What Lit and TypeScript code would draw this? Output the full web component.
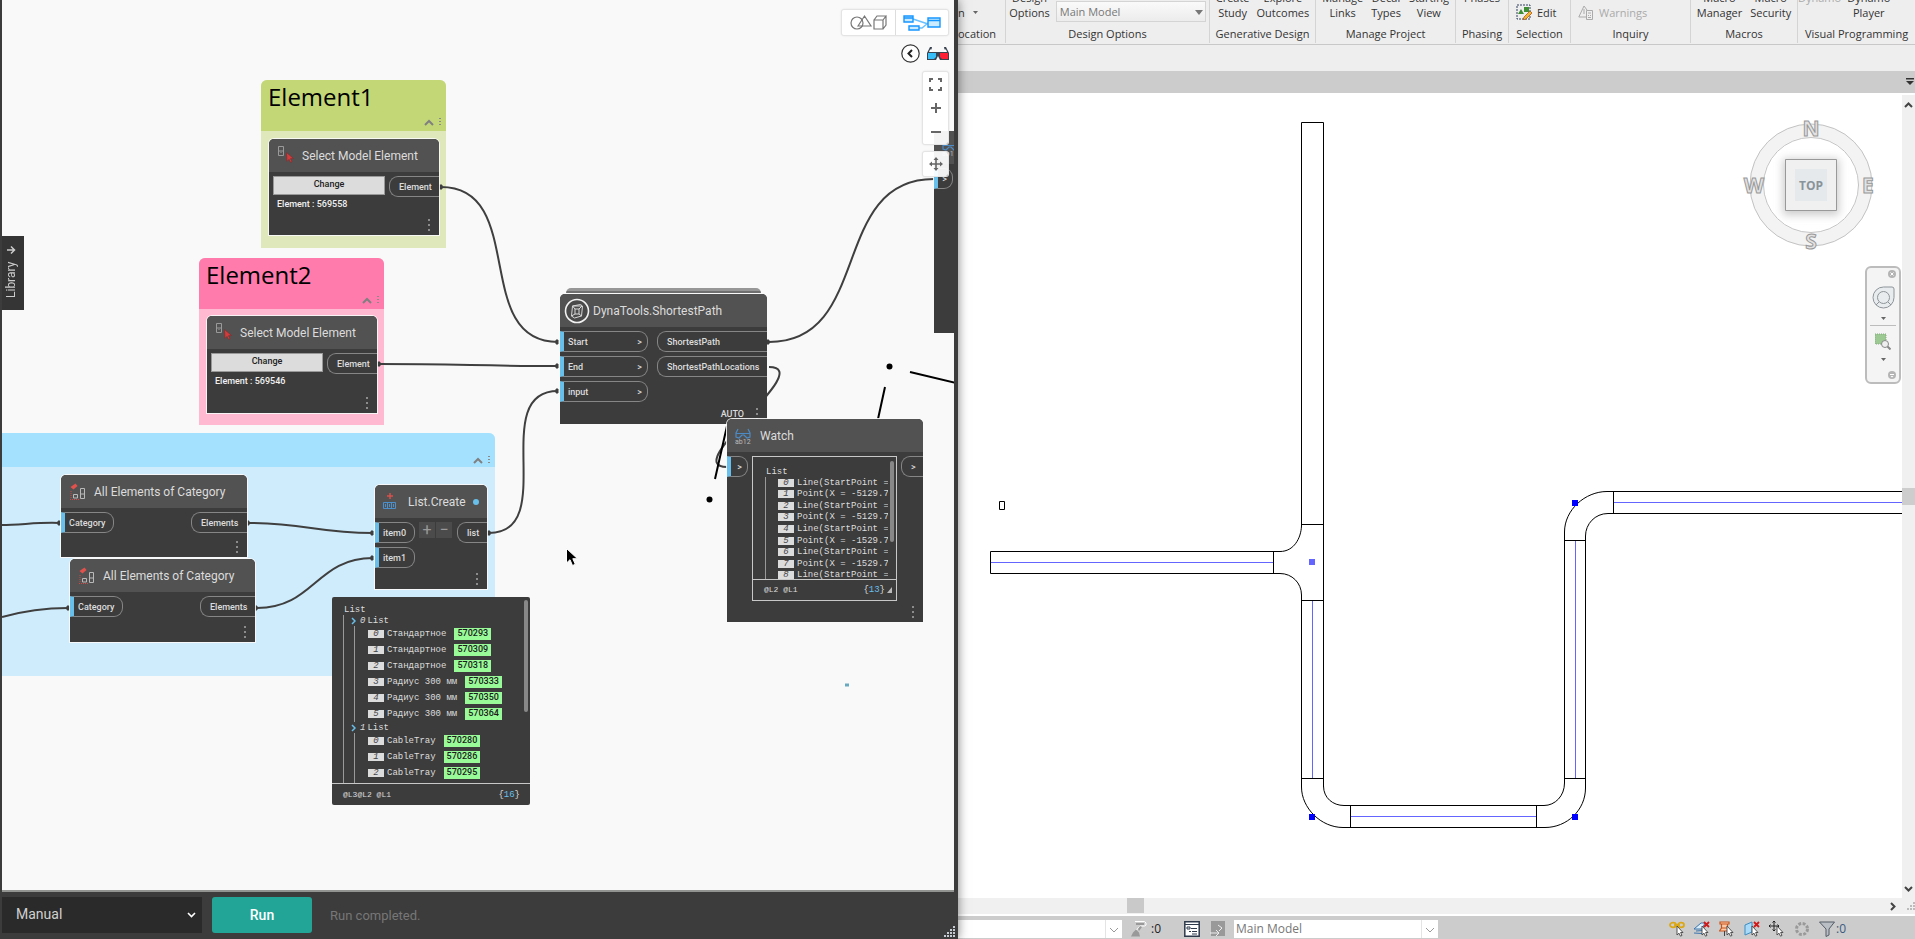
import { LitElement, html, svg, css, nothing } from "lit";
import { customElement } from "lit/decorators.js";

const kebab = svg`<svg width="3" height="12" viewBox="0 0 3 12" fill="#8c8c8c"><path d="M0 0h2v2H0zM0 5h2v2H0zM0 10h2v2H0z"/></svg>`;

const selectIcon = svg`<svg width="18" height="19" viewBox="0 0 18 19"><path d="M1.500 .5h5v9h-5zM1.500 5h5M3.500 6.500h1" fill="none" stroke="#9a9a9a"/><path d="M9.500 6.500l7 6-3 .2 1.500 3-1.500.7-1.500-3-2 2z" fill="#d23c3c" stroke="#7c2c2c" stroke-width=".6"/></svg>`;
const categoryIcon = svg`<svg width="18" height="18" viewBox="0 0 18 18"><path d="M1.500 4l5-3.500 2 2.500-4 3.500z" fill="#e2514c"/><path d="M2 8v8M1 16.500h9" stroke="#c94a46" stroke-dasharray="1 1"/><path d="M4.500 11.500h4v3.500h-4zM11.500 5.500h4v10h-4zM11.500 11h4" fill="none" stroke="#b9b9b9"/></svg>`;
const listIcon = svg`<svg width="14" height="17" viewBox="0 0 14 17"><path d="M7 0v6M4 3h6" stroke="#d8504c" stroke-width="1.500"/><path d="M.5 9.500h12v6H.5zM4.500 9.500v6M8.500 9.500v6M2.500 11v3M6.500 11v3M10.500 11v3" fill="none" stroke="#4a8fce"/></svg>`;
const watchIcon = svg`<svg width="16" height="16" viewBox="0 0 16 16"><path d="M3 1L1 5v4l3 1 3-3h2l3 3 3-1V5l-2-4M1 5.500h14" fill="none" stroke="#4d8ac4" stroke-width="1.200"/><text x="0" y="15.500" font-size="7" font-family="Roboto" fill="#bbb">ab12</text></svg>`;
const pathIcon = svg`<svg width="26" height="26" viewBox="0 0 26 26"><circle cx="13" cy="13" r="11.500" fill="#4a4a4a" stroke="#f2f2f2" stroke-width="1.600"/><path d="M8.500 8l8-1.500 2 1.500-1 10-7 2-3-2zM11 11h4v5h-4zM8.500 8L11 11M18 8l-3 3M15 16l2.500 2M11 16l-3.500 2M8.500 8l9.500 0" fill="none" stroke="#d8d8d8"/></svg>`;

type Port = { label: string; w: number; arrow?: boolean };
type Node = {
  x: number; y: number; w: number; h: number; title: string; icon: unknown;
  ins: Port[]; outs: Port[]; middle?: unknown; auto?: boolean; dot?: boolean; kind?: string;
};

const select = (id: string) => html`<div class="picker"><button class="change">Change</button><span>Element : ${id}</span></div>`;

const watchRows = [
  "Line(StartPoint = ", "Point(X = -5129.74", "Line(StartPoint = ", "Point(X = -5129.74", "Line(StartPoint = ",
  "Point(X = -1529.74", "Line(StartPoint = ", "Point(X = -1529.74", "Line(StartPoint = ",
];

const watchBox = html`<div class="watch">
  <div class="wlist"><div class="root">List</div>
    <div class="wrows">${watchRows.map((t, i) => html`<div class="row"><i class="idx">${i}</i><span>${t}</span></div>`)}</div>
    <div class="wbar"></div>
  </div>
  <div class="wfoot"><span>@L2 @L1</span><b>{<em>13</em>}</b><svg width="5" height="6"><path d="M5 0v6H0z" fill="#bbb"/></svg></div>
</div>`;

const nodes: Node[] = [
  { x: 269, y: 139, w: 170, h: 96, title: "Select Model Element", icon: selectIcon, ins: [], outs: [{ label: "Element", w: 50 }], middle: select("569558") },
  { x: 207, y: 316, w: 170, h: 97, title: "Select Model Element", icon: selectIcon, ins: [], outs: [{ label: "Element", w: 50 }], middle: select("569546") },
  { x: 61, y: 475, w: 186, h: 82, title: "All Elements of Category", icon: categoryIcon, ins: [{ label: "Category", w: 53 }], outs: [{ label: "Elements", w: 56 }] },
  { x: 70, y: 559, w: 185, h: 83, title: "All Elements of Category", icon: categoryIcon, ins: [{ label: "Category", w: 53 }], outs: [{ label: "Elements", w: 55 }] },
  { x: 375, y: 485, w: 112, h: 104, title: "List.Create", icon: listIcon, dot: true, ins: [{ label: "item0", w: 40 }, { label: "item1", w: 40 }], outs: [{ label: "list", w: 30 }], middle: html`<div class="pm"><button aria-label="Add item">+</button><button aria-label="Remove item">−</button></div>` },
  { x: 560, y: 294, w: 207, h: 130, title: "DynaTools.ShortestPath", icon: pathIcon, kind: "custom", auto: true, ins: [{ label: "Start", w: 88, arrow: true }, { label: "End", w: 88, arrow: true }, { label: "input", w: 88, arrow: true }], outs: [{ label: "ShortestPath", w: 110 }, { label: "ShortestPathLocations", w: 110 }] },
  { x: 727, y: 419, w: 196, h: 203, title: "Watch", icon: watchIcon, ins: [{ label: "", w: 21, arrow: true }], outs: [{ label: ">", w: 22 }], middle: watchBox },
  { x: 934, y: 131, w: 196, h: 202, title: "", icon: watchIcon, ins: [{ label: "", w: 19, arrow: true }], outs: [] },
];

const groups = [
  { x: 261, y: 80, w: 185, h: 168, head: 51, title: "Element1", cls: "green" },
  { x: 199, y: 258, w: 185, h: 167, head: 51, title: "Element2", cls: "pink" },
  { x: -40, y: 433, w: 535, h: 243, head: 34, title: "", cls: "blue" },
];

const preview = [
  { name: "Стандартное", id: "570293" }, { name: "Стандартное", id: "570309" }, { name: "Стандартное", id: "570318" },
  { name: "Радиус 300 мм", id: "570333" }, { name: "Радиус 300 мм", id: "570350" }, { name: "Радиус 300 мм", id: "570364" },
];
const preview2 = [
  { name: "CableTray", id: "570280" }, { name: "CableTray", id: "570286" }, { name: "CableTray", id: "570295" }, { name: "CableTray", id: "570312" },
];

@customElement("graph-panel")
export class GraphPanel extends LitElement {
  static styles = css`
    :host { display: flex; flex-direction: column; min-width: 0; background: #3c3c3c; border-left: 2px solid #3c3c3c; border-right: 4px solid #3c3c3c; box-sizing: border-box; font-family: Roboto, "Open Sans", sans-serif; position: relative; z-index: 1; box-shadow: 0 0 10px rgba(0,0,0,.5); }
    button { font: inherit; padding: 0; border: 0; background: none; color: inherit; }
    .canvas { flex: 1; position: relative; overflow: hidden; background: #f9f9f9; border-bottom: 2px solid #929492; }
    .world { position: absolute; left: -2px; top: 0; }
    .wires { position: absolute; left: 0; top: 0; width: 958px; height: 892px; }
    .group { position: absolute; border-radius: 6px 6px 0 0; overflow: hidden; }
    .ghead { display: flex; justify-content: space-between; align-items: flex-end; box-sizing: border-box; padding: 0 4px 4px 7px; }
    .gtitle { align-self: flex-start; font: 24px/34px "Open Sans", sans-serif; color: #000; }
    .gtools { display: flex; gap: 5px; align-items: center; }
    .green { background: #dfe8ba; } .green .ghead { background: #c3d776; }
    .pink { background: #ffb9d1; } .pink .ghead { background: #ff7bac; }
    .blue { background: #cfecfc; } .blue .ghead { background: #a4e1ff; padding-bottom: 2px; }
    .node { position: absolute; box-sizing: border-box; display: flex; flex-direction: column; background: #3c3c3c; border-radius: 5px 5px 0 0; color: #dcdcdc; box-shadow: 0 0 0 1px rgba(250,250,250,.9); }
    .custom { box-shadow: none; }
    .custom::before { content: ""; position: absolute; left: 6px; right: 6px; top: -6px; height: 5px; background: linear-gradient(#979797 60%, #6f6f6f 60%); border-radius: 6px 6px 0 0; }
    .nhead { flex: 0 0 33px; display: flex; align-items: center; background: #525252; border-radius: 5px 5px 0 0; font-size: 12px; line-height: 16px; white-space: nowrap; overflow: hidden; }
    .nicon { flex: 0 0 33px; display: flex; padding-left: 8px; box-sizing: border-box; }
    .custom .nicon { padding-left: 4px; }
    .ndot { width: 6px; height: 6px; border-radius: 3px; background: #68bfea; margin-left: 7px; }
    .body { display: flex; justify-content: space-between; align-items: flex-start; padding-top: 4px; font-size: 9px; font-weight: 500; }
    .ports { display: flex; flex-direction: column; gap: 4px; }
    .port { box-sizing: border-box; height: 21px; display: flex; align-items: center; justify-content: space-between; border: 1px solid #868686; white-space: nowrap; }
    .in { border-left: 4px solid #68bfea; border-radius: 0 9px 9px 0; padding: 0 5px 0 4px; }
    .out { border-right: 0; border-radius: 9px 0 0 9px; padding-left: 9px; }
    .mid { flex: 1; min-width: 0; padding: 0 4px; }
    .picker { display: flex; flex-direction: column; gap: 3px; color: #f2f2f2; }
    .picker span { padding-left: 4px; line-height: 12px; }
    .change { height: 19px; border: 1px solid #999; background: #dcdcdc; color: #222; padding-bottom: 3px; }
    .pm { display: flex; gap: 1px; }
    .pm button { width: 16px; height: 16px; background: #4b4b4b; color: #999; font: 16px/14px Roboto, sans-serif; }
    .nfoot { margin-top: auto; display: flex; justify-content: flex-end; align-items: center; gap: 12px; padding: 0 8px 4px 0; font-size: 9px; line-height: 12px; font-weight: 500; }
    .nfoot button, .gtools button { display: flex; }
    .watch { box-sizing: border-box; height: 145px; border: 1px solid #c8c8c8; display: flex; flex-direction: column; font: 9px/12px "Liberation Mono", monospace; color: #ddd; }
    .wlist { flex: 1; position: relative; overflow: hidden; padding: 10px 8px 0 12px; }
    .root { line-height: 10px; padding-left: 1px; }
    .wrows { height: 104px; display: grid; grid-auto-rows: 1fr; border-left: 1px solid #999; padding-left: 12px; overflow: hidden; }
    .row { display: flex; align-items: center; gap: 3px; white-space: pre; overflow: hidden; }
    .idx { flex: 0 0 16px; height: 8px; line-height: 9px; background: #dcdcdc; color: #444; text-align: center; }
    .wbar { position: absolute; right: 2px; top: 4px; width: 4px; height: 81px; border-radius: 2px; background: #888; }
    .wfoot { flex: 0 0 20px; display: flex; align-items: center; border-top: 1px solid #c8c8c8; padding: 0 4px 0 11px; gap: 2px; font-size: 8px; }
    .wfoot b, .pfoot b { margin-left: auto; font-weight: 400; font-size: 9px; }
    em { font-style: normal; color: #68bfea; }
    .preview { position: absolute; left: 332px; top: 597px; width: 198px; height: 208px; box-sizing: border-box; background: #3c3c3c; border-radius: 2px; display: flex; flex-direction: column; font: 9px/12px "Liberation Mono", monospace; color: #ddd; }
    .plist { flex: 1; min-height: 0; position: relative; overflow: hidden; padding: 8px 0 0 11px; }
    .tree { border-left: 1px solid #999; padding-left: 7px; }
    .branch { display: flex; align-items: center; height: 12px; gap: 2px; }
    .branch svg { margin-right: 2px; }
    .leaves { display: grid; grid-auto-rows: 1fr; border-left: 1px solid #999; margin: -1px 0 0 3px; padding-left: 13px; }
    .six { height: 96px; } .four { height: 64px; }
    .tag { margin-left: 5px; height: 12px; padding: 0 3px; background: #98fb98; color: #1c1c1c; font: 500 9px/11px Roboto, sans-serif; }
    .pbar { position: absolute; right: 2px; top: 3px; width: 4px; height: 112px; border-radius: 2px; background: #888; }
    .pfoot { flex: 0 0 21px; border-top: 1px solid #c8c8c8; display: flex; align-items: center; padding: 0 10px 0 11px; font-size: 8px; }
    .cursor { position: absolute; left: 566px; top: 548px; }
    .library { position: absolute; left: 0; top: 236px; width: 22px; height: 74px; background: #353535; color: #ccc; writing-mode: vertical-rl; transform: rotate(180deg); font-size: 12px; display: flex; align-items: center; justify-content: space-between; padding: 12px 0 9px 4px; box-sizing: border-box; }
    .library svg { transform: rotate(180deg); }
    .tools { position: absolute; right: 6px; top: 10px; display: flex; flex-direction: column; align-items: flex-end; }
    .card { background: rgba(255,255,255,.93); border-radius: 2px; box-shadow: 0 0 0 1px #e4e4e4, 0 0 3px rgba(0,0,0,.2); display: flex; }
    .card button { display: flex; align-items: center; justify-content: center; }
    .modes button { width: 53px; height: 25px; } .modes button + button { border-left: 1px solid #ddd; }
    .nav { display: flex; gap: 6px; margin: 9px -2px 0 0; align-items: center; } .nav button { display: flex; }
    .zoom { flex-direction: column; margin-top: 9px; } .zoom button { width: 25px; height: 24px; }
    .move { margin-top: 8px; } .move button { width: 25px; height: 24px; }
    .bar { flex: 0 0 47px; display: flex; align-items: center; box-sizing: border-box; padding-bottom: 1px; font-size: 13px; position: relative; }
    .mode { flex: 0 0 200px; height: 36px; position: relative; margin-right: 10px; }
    .mode select { appearance: none; width: 100%; height: 100%; border: 0; border-radius: 0; background: #2a2a2a; color: #d0d0d0; font: 14px/20px Roboto, sans-serif; padding: 0 0 2px 14px; }
    .mode svg { position: absolute; right: 6px; top: 15px; pointer-events: none; }
    .run { width: 100px; height: 36px; background: #22a597; color: #fff; border-radius: 3px; font: 500 14px/20px Roboto, sans-serif; }
    .msg { margin-left: 18px; color: #777; }
    .grip { position: absolute; right: -2px; bottom: 1px; }
  `;

  port(p: Port, side: string) {
    return html`<div class="port ${side}" style="width:${p.w}px"><span>${p.label}</span>${p.arrow ? html`<span>&gt;</span>` : nothing}</div>`;
  }

  node(n: Node) {
    return html`<section class="node ${n.kind ?? ""}" style="left:${n.x}px;top:${n.y}px;width:${n.w}px;height:${n.h}px">
      <div class="nhead"><span class="nicon">${n.icon}</span><span>${n.title}</span>${n.dot ? html`<span class="ndot"></span>` : nothing}</div>
      <div class="body">
        ${n.ins.length ? html`<div class="ports">${n.ins.map((p) => this.port(p, "in"))}</div>` : nothing}
        ${n.middle ? html`<div class="mid">${n.middle}</div>` : nothing}
        <div class="ports">${n.outs.map((p) => this.port(p, "out"))}</div>
      </div>
      <div class="nfoot">${n.auto ? html`<span>AUTO</span>` : nothing}<button aria-label="Node menu">${kebab}</button></div>
    </section>`;
  }

  leaf(p: { name: string; id: string }, i: number) {
    return html`<div class="row"><i class="idx">${i}</i><span>${p.name}</span><span class="tag">${p.id}</span></div>`;
  }

  render() {
    const chev = svg`<svg width="5" height="8"><path d="M1 1l3 3-3 3" fill="none" stroke="#68bfea" stroke-width="1.500"/></svg>`;
    return html`
      <div class="canvas">
        <div class="world">
          ${groups.map((g) => html`<div class="group ${g.cls}" style="left:${g.x}px;top:${g.y}px;width:${g.w}px;height:${g.h}px">
            <div class="ghead" style="height:${g.head}px"><span class="gtitle">${g.title}</span>
              <span class="gtools"><svg width="10" height="7"><path d="M1 6l4-4 4 4" fill="none" stroke="#808080" stroke-width="2"/></svg>
              <svg width="3" height="9" fill="#8a8a8a"><path d="M0 0h2v1H0zM0 3h2v1H0zM0 6h2v1H0z"/></svg></span></div></div>`)}
          <svg class="wires" fill="none" stroke="#3f3f3f" stroke-width="2">
            <path d="M441 187C528 187 471 342 558 342M379 364C460 364 480 366 558 366M489 533C560 533 487 391 558 391M769 342C873 342 829 179 934 179M249 523C305 523 317 533 373 533M257 608C314 608 316 558 373 558M2 525C20 525 40 522 59 523M2 617C20 612 45 608 68 608M769 367C818 367 678 467 727 467"/>
            <path d="M439 185h3v4h-3zM377 362h3v4h-3zM556 340h2v4h-2zM556 364h2v4h-2zM556 389h2v4h-2zM487 531h3v4h-3zM767 340h2v4h-2zM247 521h2v4h-2zM255 606h2v4h-2zM371 531h2v4h-2zM371 556h2v4h-2zM58 521h2v4h-2zM67 606h2v4h-2z" stroke-width="1" fill="#3f3f3f"/>
            <path d="M910 372l46 11M885 387l-7 32M727 426l-12 53" stroke="#000"/>
            <g fill="#000" stroke="none"><circle cx="889.500" cy="366.500" r="3"/><circle cx="709.500" cy="499.500" r="3"/></g>
            <path d="M845 685h4" stroke="#68a9c0" stroke-width="3"/>
          </svg>
          ${nodes.map((n) => this.node(n))}
          <div class="preview">
            <div class="plist"><div class="root">List</div>
              <div class="tree">
                <div class="branch">${chev}<i>0</i><span>List</span></div>
                <div class="leaves six">${preview.map((p, i) => this.leaf(p, i))}</div>
                <div class="branch">${chev}<i>1</i><span>List</span></div>
                <div class="leaves four">${preview2.map((p, i) => this.leaf(p, i))}</div>
              </div>
              <div class="pbar"></div>
            </div>
            <div class="pfoot"><span>@L3@L2 @L1</span><b>{<em>16</em>}</b></div>
          </div>
          <svg class="cursor" width="14" height="20" viewBox="0 0 14 20"><path d="M.5.5v14.500l3.500-3.300 2.500 5.800 2.800-1.200-2.500-5.600h4.700z" fill="#000" stroke="#fff"/></svg>
        </div>
        <button class="library"><span>Library</span><svg width="10" height="10"><path d="M1 5h7M5 1.500L8.500 5 5 8.500" fill="none" stroke="#ccc" stroke-width="1.500"/></svg></button>
        <div class="tools">
          <div class="card modes">
            <button aria-label="Geometry view"><svg width="37" height="17" fill="none" stroke="#777" stroke-width="1.200"><circle cx="7" cy="9" r="6"/><path d="M8 12L14.500 2 21 12zM24 6h9v9h-9zM24 6l3-4h9l-3 4M36 2v9l-3 4"/></svg></button>
            <button aria-label="Graph view"><svg width="38" height="16" fill="#cdebff" stroke="#1496ff" stroke-width="1.400"><path d="M10 4l15 5M15 13h4l6-5" fill="none" stroke="#68bfff"/><path d="M1 1h9v6H1zM1 3h9M6 11h10v4H6zM25 3h12v9H25zM25 5.500h12"/></svg></button>
          </div>
          <div class="nav">
            <button aria-label="Collapse"><svg width="19" height="19" fill="none"><circle cx="9.500" cy="9.500" r="8.700" fill="#fff" stroke="#333" stroke-width="1.200"/><path d="M11 6L7.500 9.500 11 13" stroke="#222" stroke-width="2"/></svg></button>
            <button aria-label="3D glasses"><svg width="24" height="16"><path d="M1 7L4 1h2l-1 5h14l-1-5h2l3 6v7h-9l-2-4-2 4H1z" fill="#39434f"/><path d="M2 7h8v4l-2 2H2z" fill="#37bdf8"/><path d="M14 7h8v6h-6l-2-2z" fill="#ff2036"/><path d="M4 3.500h2V6H3zM18 3.500h2L21 6h-3z" fill="#fff"/></svg></button>
          </div>
          <div class="card zoom">
            <button aria-label="Fit"><svg width="13" height="13"><path d="M1 4V1h3M9 1h3v3M12 9v3H9M4 12H1V9" fill="none" stroke="#666" stroke-width="2"/></svg></button>
            <button aria-label="Zoom in"><svg width="10" height="10"><path d="M5 0v10M0 5h10" stroke="#666" stroke-width="2"/></svg></button>
            <button aria-label="Zoom out"><svg width="10" height="10"><path d="M0 5h10" stroke="#666" stroke-width="2"/></svg></button>
          </div>
          <div class="card move"><button aria-label="Pan"><svg width="14" height="14"><path d="M7 2v10M2 7h10" stroke="#666" stroke-width="1.600"/><path d="M7 0l2.500 3h-5zM7 14l2.500-3h-5zM0 7l3-2.500v5zM14 7l-3-2.500v5z" fill="#666"/></svg></button></div>
        </div>
      </div>
      <div class="bar">
        <div class="mode"><select aria-label="Run mode"><option>Manual</option><option>Automatic</option></select>
          <svg width="9" height="7"><path d="M1 1l3.500 3.500L8 1" fill="none" stroke="#fff" stroke-width="1.600"/></svg></div>
        <button class="run">Run</button><span class="msg">Run completed.</span>
        <svg class="grip" width="12" height="12" fill="#c4cbd2"><path d="M9 0h2v2H9zM6 3h2v2H6zM9 3h2v2H9zM3 6h2v2H3zM6 6h2v2H6zM9 6h2v2H9zM0 9h2v2H0zM3 9h2v2H3zM6 9h2v2H6zM9 9h2v2H9z"/></svg>
      </div>`;
  }
}

const pointer = "M0 0v9l2-1.800 1.500 3 1.500-.8-1.400-2.900H6z";

@customElement("model-panel")
export class ModelPanel extends LitElement {
  static styles = css`
    :host { display: flex; flex-direction: column; min-width: 0; background: #fff; font: 11px/15px "Open Sans", sans-serif; color: #333; overflow: hidden; }
    button { font: inherit; padding: 0; border: 0; background: none; color: inherit; }
    select { appearance: none; font: inherit; color: #777; border-radius: 0; }
    .ribbon { flex: 0 0 44px; display: flex; background: #eee; border-bottom: 1px solid #c8c8c8; overflow: hidden; }
    .panel { flex: 0 0 auto; box-sizing: border-box; border-right: 1px solid #d4d4d4; display: flex; flex-direction: column; align-items: center; justify-content: space-between; height: 43px; white-space: nowrap; padding-bottom: 2px; }
    .panel:last-child { flex: 1 0 auto; border-right: 0; }
    .p0 { width: 48px; align-items: flex-start; } .p1 { width: 204px; } .p2 { width: 106px; } .p3 { width: 140px; } .p4 { width: 53px; } .p5 { width: 62px; } .p6 { width: 120px; } .p7 { width: 107px; }
    .items { display: flex; gap: 7px; height: 22px; align-items: flex-end; align-self: stretch; justify-content: center; }
    .big { display: flex; flex-direction: column; align-items: center; justify-content: flex-end; height: 20px; margin-bottom: 2px; overflow: visible; }
    .big span { display: block; line-height: 15px; min-height: 15px; }
    .p0 .items { justify-content: flex-start; gap: 6px; }
    .p3 .items, .p7 .items { gap: 8px; }
    .p8 .items { gap: 6px; justify-content: flex-start; }
    .p5 .items, .p6 .items { justify-content: flex-start; padding-left: 7px; }
    .small { display: flex; align-items: center; gap: 5px; height: 20px; }
    .p0 .small { gap: 8px; }
    .off { color: #aaa; }
    .opt { position: relative; width: 150px; height: 21px; margin-left: -1px; }
    .opt select { width: 100%; height: 100%; border: 1px solid #d4d4d4; background: linear-gradient(#fafafa, #ececec); padding: 0 0 0 3px; }
    .opt svg { position: absolute; right: 3px; top: 9px; pointer-events: none; }
    .gap { flex: 0 0 26px; background: #eee; }
    .tabs { flex: 0 0 22px; background: #ccc; display: flex; justify-content: flex-end; align-items: center; }
    .main { flex: 1; min-height: 0; display: grid; grid-template-columns: 1fr 13px; }
    .view { position: relative; overflow: hidden; }
    .draw { position: absolute; left: 0; top: 0; width: 100%; height: 100%; }
    .cube { position: absolute; right: 22px; top: 23px; overflow: visible; }
    .navbar { position: absolute; right: 1px; top: 173px; width: 36px; height: 118px; box-sizing: border-box; border: 2px solid #bcbcbc; border-radius: 6px; background: #f4f4f4; display: flex; flex-direction: column; align-items: center; padding-top: 2px; }
    .navbar button { display: flex; }
    .end { align-self: flex-end; margin-right: 3px; }
    .wheel { margin-top: 8px; } .tri { margin: 8px 0 5px; } .pick { border-top: 1px solid #bcbcbc; padding: 7px 5px 0; }
    .navbar .end:last-child { margin-top: auto; margin-bottom: 3px; }
    .vs { margin-top: 2px; background: #f0f0f0; position: relative; display: flex; flex-direction: column; justify-content: space-between; align-items: center; padding: 7px 0 6px; }
    .vt { position: absolute; left: 0; right: 0; top: 393px; height: 17px; background: #cdcdcd; }
    .hs { flex: 0 0 16px; background: #f0f0f0; border-bottom: 2px solid #fff; position: relative; display: flex; justify-content: flex-end; align-items: center; gap: 11px; }
    .ht { position: absolute; left: 169px; top: 0; width: 17px; height: 15px; background: #c9c9c9; }
    .status { flex: 0 0 23px; background: #ccc; display: flex; align-items: center; padding-top: 2px; box-sizing: border-box; overflow: hidden; }
    .status button { display: flex; }
    .cb { position: relative; height: 18px; } .cb select { width: 100%; height: 100%; background: #fff; border: 0; padding: 0 0 0 2px; font-size: 12px; }
    .cb svg { position: absolute; right: 3px; top: 7px; } .cb::after { content: ""; position: absolute; right: 16px; top: 0; bottom: 0; border-left: 1px solid #e4e4e4; }
    .c1 { width: 164px; } .c2 { width: 204px; }
    .w { margin-left: 9px; } .n { width: 33px; margin-left: 4px; color: #222; font-size: 12px; }
    .t { margin: 0 8px 0 10px; } .right { margin-left: auto; display: flex; gap: 9px; align-items: center; padding-right: 69px; }
    .filter { display: flex; align-items: center; gap: 1px; font-size: 12px; color: #3a5a80; }
  `;

  big(a: string, b: string, off = false) {
    return html`<button class="big ${off ? "off" : ""}"><span>${a}</span><span>${b}</span></button>`;
  }

  render() {
    const down = svg`<svg width="10" height="6"><path d="M1 1l4 4 4-4" fill="none" stroke="#999"/></svg>`;
    const tri = svg`<svg width="5" height="3"><path d="M0 0h5L2.500 3z" fill="#666"/></svg>`;
    const cursor = svg`<path d="${pointer}" transform="translate(8 5)" fill="#fff" stroke="#444" stroke-width=".9"/>`;
    return html`
      <nav class="ribbon">
        <div class="panel p0"><div class="items"><button class="small"><span>n</span>${tri}</button></div><span>ocation</span></div>
        <div class="panel p1"><div class="items">${this.big("Design", "Options")}
          <div class="opt"><select aria-label="Design option"><option>Main Model</option></select><svg width="8" height="5"><path d="M0 0h8L4 5z" fill="#777"/></svg></div></div><span>Design Options</span></div>
        <div class="panel p2"><div class="items">${this.big("Create", "Study")}${this.big("Explore", "Outcomes")}</div><span>Generative Design</span></div>
        <div class="panel p3"><div class="items">${this.big("Manage", "Links")}${this.big("Decal", "Types")}${this.big("Starting", "View")}</div><span>Manage Project</span></div>
        <div class="panel p4"><div class="items">${this.big("Phases", "")}</div><span>Phasing</span></div>
        <div class="panel p5"><div class="items"><button class="small"><svg width="16" height="16"><path d="M1 1h13v14H1z" fill="none" stroke="#33415e" stroke-dasharray="2 1"/><path d="M2 10l3-5 3 5zM8 3h5v5H8z" fill="#3e8f33"/><path d="M14 7l2 2-6 6-3 1 1-3z" fill="#f3b52c" stroke="#a3471c" stroke-width=".7"/></svg><span>Edit</span></button></div><span>Selection</span></div>
        <div class="panel p6"><div class="items"><button class="small off"><svg width="16" height="16" fill="none" stroke="#aaa"><path d="M8 13H.8L6 2l3 4M6 5v5M8.500 6.500h6v9h-6zM10 9h3M10 11.500h1M12 11.500h1M10 13.500h3"/></svg><span>Warnings</span></button></div><span>Inquiry</span></div>
        <div class="panel p7"><div class="items">${this.big("Macro", "Manager")}${this.big("Macro", "Security")}</div><span>Macros</span></div>
        <div class="panel p8"><div class="items">${this.big("Dynamo", "", true)}${this.big("Dynamo", "Player")}</div><span>Visual Programming</span></div>
      </nav>
      <div class="gap"></div>
      <div class="tabs"><svg width="10" height="8"><path d="M1 0h8v1.500H1zM1 3h8L5 7z" fill="#333"/></svg></div>
      <div class="main">
        <div class="view">
          <svg class="draw"><g transform="translate(-958 -93)" fill="none" stroke="#000">
            <path d="M1301.500 122.500h22V787M1301.500 122.500V526C1301 538 1294 551.500 1280 551.500H990.500v22H1280C1292 573.500 1301.500 583 1301.500 595V787C1301.500 808 1321 827.500 1343 827.500H1545C1567 827.500 1585.500 810 1585.500 788V536C1585.500 524 1595 513.500 1608 513.500H1902M1323.500 786C1323.500 798 1333 805.500 1344 805.500H1544C1555 805.500 1564.500 796 1564.500 783V532C1564.500 510 1585 491.500 1607 491.500H1902M1301.500 524.500h22M1273.500 551.500v22M1301.500 600.500h22M1301.500 778.500h22M1350.500 805.500v22M1536.500 805.500v22M1564.500 778.500h21M1564.500 540.500h21M1613.500 491.500v22M999.500 501.500h5v8h-5z"/>
            <path d="M991 562.500h282M1312.500 601v177M1351 816.500h185M1575.500 541v237M1614 502.500h288" stroke="#6464ff"/>
            <path d="M1309 559h6v6h-6z" fill="#6464ff" stroke="none"/><path d="M1309 814h6v6h-6zM1572 814h6v6h-6zM1572 500h6v6h-6z" fill="#00f" stroke="none"/>
          </g></svg>
          <svg class="cube" width="138" height="138" viewBox="0 0 138 138">
            <defs><filter id="b" x="-30%" y="-30%" width="160%" height="160%"><feGaussianBlur stdDeviation="4"/></filter></defs>
            <circle cx="69" cy="69" r="54.500" fill="none" stroke="#f3f3f3" stroke-width="13"/>
            <g fill="none" stroke="#c3c3c3"><circle cx="69" cy="69" r="61"/><circle cx="69" cy="69" r="47.500"/></g>
            <path d="M41 43h56v56H41z" fill="#ccc" filter="url(#b)"/>
            <path d="M43.500 43.500h51v51h-51z" fill="#f0f0f0" stroke="#999"/><path d="M53 53h32v32H53z" fill="#e6e9eb"/>
            <g font-family="Open Sans" font-weight="700" text-anchor="middle"><text x="69" y="74" font-size="12" fill="#89939a">TOP</text>
            <g font-size="21" fill="#e2e2e2" stroke="#989898" stroke-width="1"><text x="69" y="20">N</text><text x="69" y="133">S</text><text x="12" y="77">W</text><text x="126" y="77">E</text></g></g>
          </svg>
          <div class="navbar">
            <button class="end" aria-label="Close"><svg width="8" height="8"><circle cx="4" cy="4" r="4" fill="#b4b4b4"/><path d="M2.500 2.500l3 3M5.500 2.500l-3 3" stroke="#fff"/></svg></button>
            <button class="wheel" aria-label="Steering wheel"><svg width="23" height="23" fill="none" stroke="#8d9499"><path d="M11.500 1H20q2 0 2 2v8.500A10.500 10.500 0 1 1 11.500 1z" fill="#e9ecee"/><circle cx="11.500" cy="11.500" r="6"/><path d="M7 16l-3 3M16 16l3 3"/></svg></button>
            <button class="tri" aria-label="Wheel options">${tri}</button>
            <button class="pick" aria-label="Zoom region"><svg width="16" height="17"><path d="M0 1h11v10H0z" fill="#9cc992" stroke="#86a880" stroke-dasharray="1 1"/><circle cx="10" cy="11" r="3.500" fill="#eee" stroke="#888"/><path d="M12.500 13.500l3 3" stroke="#888" stroke-width="2"/></svg></button>
            <button class="tri" aria-label="Zoom options">${tri}</button>
            <button class="end" aria-label="Customise"><svg width="8" height="8"><circle cx="4" cy="4" r="4" fill="#b4b4b4"/><path d="M2 3.500h4" stroke="#fff"/><path d="M2.500 5h3L4 6.500z" fill="#fff"/></svg></button>
          </div>
        </div>
        <div class="vs"><svg width="9" height="6"><path d="M1 5l3.500-3.500L8 5" fill="none" stroke="#444" stroke-width="2"/></svg><div class="vt"></div><svg width="9" height="6"><path d="M1 1l3.500 3.500L8 1" fill="none" stroke="#444" stroke-width="2"/></svg></div>
      </div>
      <div class="hs"><div class="ht"></div><svg width="6" height="9"><path d="M1 1l3.500 3.500L1 8" fill="none" stroke="#444" stroke-width="2"/></svg><svg width="8" height="8" fill="#bbb"><path d="M6 0h2v2H6zM3 3h2v2H3zM6 3h2v2H6zM0 6h2v2H0zM3 6h2v2H3zM6 6h2v2H6z"/></svg></div>
      <footer class="status">
        <div class="cb c1"><select aria-label="Workset"><option></option></select>${down}</div>
        <svg class="w" width="16" height="16"><path d="M4 .5h9.500l1.500 1.500v2l-1.500 1H9L5.500 9" fill="none" stroke="#fff"/><path d="M5 2h8v2H5zM0 15.500l2-4 3-3 3 3 1 4zM7 8l2-3 2 1-3 4z" fill="#999"/></svg><span class="n">:0</span>
        <button aria-label="Editing requests"><svg width="16" height="16"><path d="M.8.8h14.400v14.400H.8z" fill="#fff" stroke="#2e3a4c" stroke-width="1.500"/><path d="M1 3.500h14M3 6h3v2H3zM7 7.500h6M5 10.500h2M8 10.500h5M8 13h5" fill="none" stroke="#2e3a4c"/></svg></button>
        <svg class="t" width="16" height="16"><path d="M1 0h14v15H1z" fill="#999"/><path d="M0 12h9M6 9l3 3-3 3M8 4l4 3-3 3" fill="none" stroke="#eee"/></svg>
        <div class="cb c2"><select aria-label="Active option"><option>Main Model</option></select>${down}</div>
        <div class="right">
          <button aria-label="Select links"><svg width="16" height="16"><g fill="none" stroke="#dba713" stroke-width="1.800"><ellipse cx="4" cy="4" rx="3" ry="2.300"/><ellipse cx="12" cy="4" rx="3" ry="2.300"/><path d="M5 4h6"/></g>${cursor}</svg></button>
          <button aria-label="Select underlay"><svg width="16" height="16"><path d="M0 8l7-6h4L8 8zM0 12l8 .5M2 10l7-.5" fill="#dceefa" stroke="#3a74ad"/>${cursor}<path d="M10 1l5 5M15 1l-5 5" stroke="#d01818" stroke-width="1.800"/></svg></button>
          <button aria-label="Select pinned"><svg width="16" height="16"><path d="M1 1h9v2H8.500v4l2 3H.5l2-3V3H1zM2.500 3h6M2.500 7h6" fill="#fbc9a6" stroke="#c5551f" stroke-width="1.200"/><path d="M5.500 10v5" stroke="#444"/>${cursor}</svg></button>
          <button aria-label="Select by face"><svg width="16" height="16"><path d="M1 4l7-3v10l-7 3z" fill="#a9daf7" stroke="#3c8dc4"/>${cursor}<path d="M10 1l5 5M15 1l-5 5" stroke="#d01818" stroke-width="1.800"/></svg></button>
          <button aria-label="Drag on selection"><svg width="16" height="16"><path d="M5 0v10M0 5h10M3.500 1.500L5 0l1.500 1.500M3.500 8.500L5 10l1.500-1.500M1.500 3.500L0 5l1.500 1.500M8.500 3.500L10 5 8.500 6.500" fill="none" stroke="#222"/>${cursor}</svg></button>
          <svg width="16" height="16"><circle cx="8" cy="8" r="5.500" fill="none" stroke="#999" stroke-width="3" stroke-dasharray="2.800 1.520"/></svg>
          <span class="filter"><svg width="16" height="16"><path d="M.5 1h15L10 8v6l-3 1.500V8z" fill="#b9bec4" stroke="#555c66"/></svg>:0</span>
        </div>
      </footer>`;
  }
}

@customElement("app-root")
export class AppRoot extends LitElement {
  static styles = css`
    :host { display: grid; grid-template-columns: 958fr 957fr; height: 100vh; overflow: hidden; }
  `;
  render() {
    return html`<graph-panel></graph-panel><model-panel></model-panel>`;
  }
}
